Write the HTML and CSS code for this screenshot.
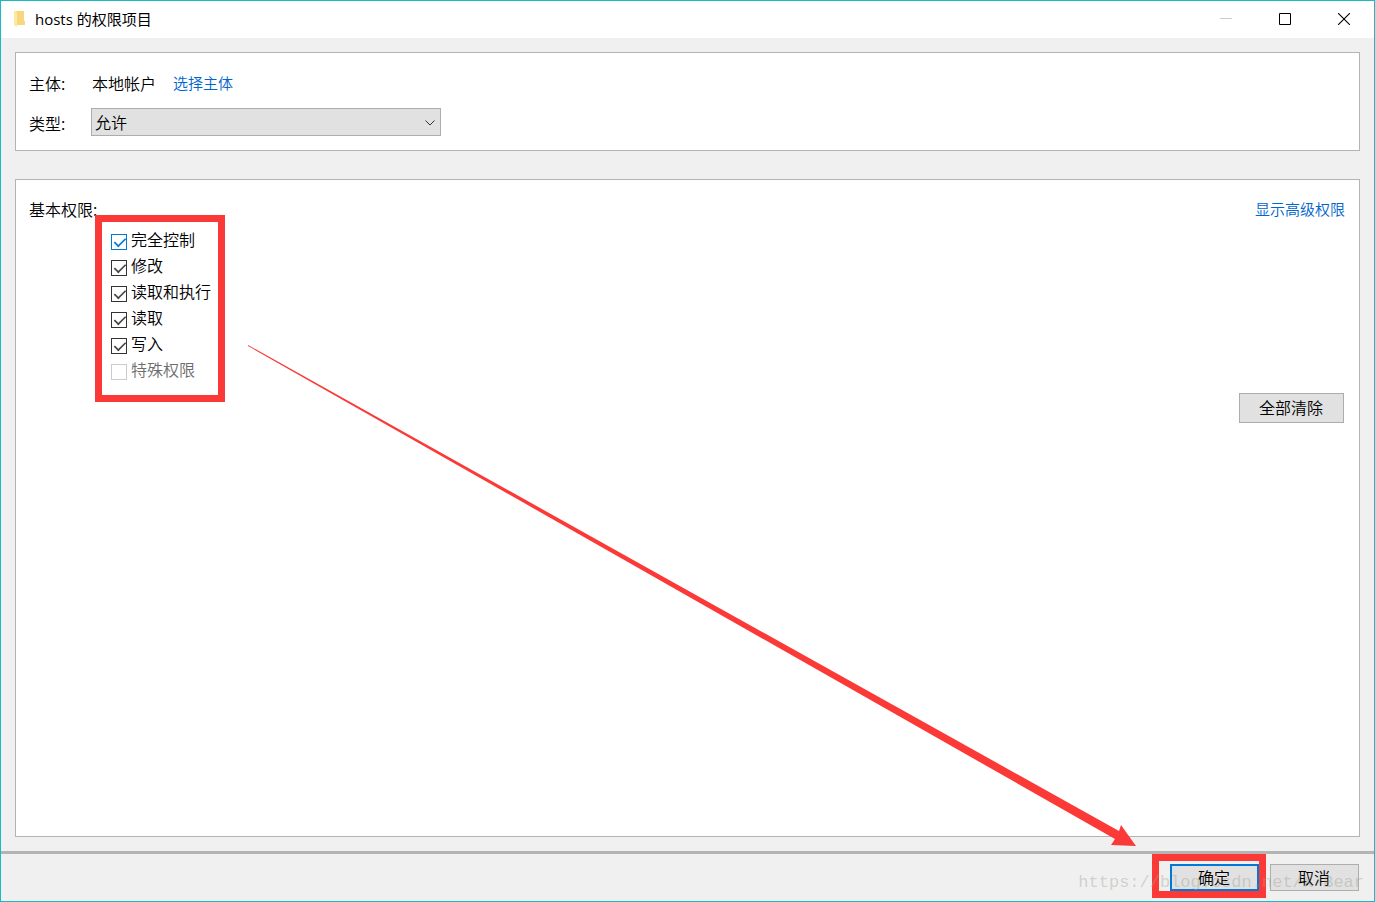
FILE: index.html
```html
<!DOCTYPE html>
<html lang="zh-CN">
<head>
    <meta charset="UTF-8">
    <meta name="viewport" content="width=device-width, initial-scale=1.0">
    <title>hosts 的权限项目</title>
    <link rel="stylesheet" href="styles.css">
</head>
<body>
    <div class="window">
        <header class="titlebar">
            <svg class="folder" width="14" height="18" viewBox="0 0 14 18">
                <path d="M3 1h8v10h1v4H3z" fill="#f6d77c"/>
                <path d="M1 1h2l1 2v14l-3-2z" fill="#fde9a4"/>
            </svg>
            <h1>hosts 的权限项目</h1>
            <div class="window-buttons">
                <button type="button" aria-label="最小化" disabled>
                    <svg width="12" height="12" viewBox="0 0 12 12"><path d="M0 5.5h12" stroke="#ccc"/></svg>
                </button>
                <button type="button" aria-label="最大化">
                    <svg width="12" height="12" viewBox="0 0 12 12"><path d="M.5.5h11v11H.5z" fill="none" stroke="#000"/></svg>
                </button>
                <button type="button" aria-label="关闭">
                    <svg width="12" height="12" viewBox="0 0 12 12"><path d="M0 0l12 12M12 0L0 12" stroke="#000" stroke-width="1.1"/></svg>
                </button>
            </div>
        </header>

        <main class="content">
            <section class="panel principal">
                <span>主体:</span>
                <div class="principal-name">
                    <span>本地帐户</span>
                    <a href="#">选择主体</a>
                </div>
                <label for="type">类型:</label>
                <div class="select">
                    <select id="type">
                        <option>允许</option>
                        <option>拒绝</option>
                    </select>
                    <svg class="chevron" width="10" height="6" viewBox="0 0 10 6"><path d="M.5.5L5 5 9.500.5" fill="none" stroke="#333"/></svg>
                </div>
            </section>

            <section class="panel permissions">
                <div class="permissions-head">
                    <span id="basic">基本权限:</span>
                    <a href="#">显示高级权限</a>
                </div>
                <div class="permission-list" role="group" aria-labelledby="basic">
                    <label><input type="checkbox" class="hot" checked>完全控制</label>
                    <label><input type="checkbox" checked>修改</label>
                    <label><input type="checkbox" checked>读取和执行</label>
                    <label><input type="checkbox" checked>读取</label>
                    <label><input type="checkbox" checked>写入</label>
                    <label class="disabled"><input type="checkbox" disabled>特殊权限</label>
                </div>
                <button type="button" class="btn clear">全部清除</button>
            </section>
        </main>

        <footer class="actions">
            <div class="confirm">
                <button type="button" class="btn primary">确定</button>
            </div>
            <button type="button" class="btn">取消</button>
            <span class="watermark">https://blog.csdn.net/X Bear</span>
        </footer>

        <svg class="arrow" viewBox="0 0 888 501" preserveAspectRatio="none" aria-hidden="true">
            <path d="M0 0L871 486 873 480 888 501 863 500 867 494 0 1z" fill="#fb3a38"/>
        </svg>
    </div>
</body>
</html>
```
FILE: styles.css
```css
* {
    box-sizing: border-box;
}
body {
    margin: 0;
    font: 16px/22px "Noto Sans CJK SC", sans-serif;
    font-weight: 350;
    color: #000;
}
button, select {
    font: inherit;
    color: inherit;
}
a {
    color: #0066cc;
    font-size: 15px;
    text-decoration: none;
}
.window {
    position: relative;
    display: flex;
    flex-direction: column;
    min-height: 100vh;
    border: 1px solid #1ab9c4;
    background: #f0f0f0;
}

/* title bar */
.titlebar {
    display: flex;
    align-items: center;
    height: 37px;
    padding: 0 1px 1px 12px;
    background: #fff;
}
.titlebar h1 {
    margin: 0 0 0 8px;
    font-family: "Open Sans", "Noto Sans CJK SC", sans-serif;
    font-size: 15px;
    font-weight: 400;
}
.window-buttons {
    display: flex;
    margin-left: auto;
}
.window-buttons button {
    display: flex;
    align-items: center;
    justify-content: center;
    width: 59px;
    height: 36px;
    padding: 0;
    border: 0;
    background: none;
}

/* panels */
.content {
    flex: 1;
    display: flex;
    flex-direction: column;
    gap: 28px;
    padding: 14px;
}
.panel {
    border: 1px solid #b4b4b4;
    background: #fff;
}
.principal {
    display: grid;
    grid-template-columns: 62px 1fr;
    row-gap: 14px;
    padding: 19px 13px 14px;
    align-items: center;
}
.principal label {
    padding-top: 2px;
}
.principal-name {
    display: flex;
    gap: 17px;
    padding-left: 1px;
}
.select {
    position: relative;
    width: 350px;
}
.select select {
    display: block;
    width: 100%;
    height: 28px;
    padding: 0 3px 1px;
    border: 1px solid #adadad;
    border-radius: 0;
    background: #e1e1e1;
    appearance: none;
}
.chevron {
    position: absolute;
    right: 6px;
    top: 12px;
    pointer-events: none;
}
.permissions {
    flex: 1;
    padding: 18px 14px 14px 13px;
}
.permissions-head {
    display: flex;
    justify-content: space-between;
}
.permission-list {
    position: relative;
    width: 130px;
    margin-left: 66px;
    padding: 7px 16px 19px;
}
.permission-list label {
    display: flex;
    align-items: center;
    gap: 4px;
    height: 26px;
    padding-bottom: 2px;
    white-space: nowrap;
}
.permission-list input {
    appearance: none;
    flex: none;
    width: 16px;
    height: 16px;
    margin: 6px 0 0;
    border: 1px solid #333;
    background: #fff;
    color: #444;
}
.permission-list input.hot {
    border-color: #0078d7;
    color: #0078d7;
}
.permission-list input:checked::before {
    content: "";
    display: block;
    width: 12px;
    height: 6px;
    margin: 2px 0 0 1px;
    border: solid currentColor;
    border-width: 0 0 2px 2px;
    transform: rotate(-45deg) scale(0.8);
}
.permission-list input:disabled {
    border-color: #ccc;
}
.permission-list .disabled {
    color: #6d6d6d;
}

/* buttons */
.btn {
    width: 89px;
    height: 27px;
    padding: 0 1px 2px 0;
    border: 1px solid #adadad;
    background: #e1e1e1;
}
.btn.primary {
    border: 2px solid #0078d7;
}
.btn.clear {
    display: block;
    width: 105px;
    height: 30px;
    margin: -9px 1px 0 auto;
}
.actions {
    position: relative;
    display: flex;
    justify-content: flex-end;
    gap: 11px;
    padding: 10px 15px;
    border-top: 3px solid #b4b4b4;
}
.confirm {
    position: relative;
}

/* highlight frames and arrow */
.permission-list::after,
.confirm::after {
    content: "";
    position: absolute;
    border: 7px solid #fb3a38;
    pointer-events: none;
}
.permission-list::after {
    inset: -5px 0 0;
}
.confirm::after {
    inset: -10px -7px -7px -18px;
}
.arrow {
    position: absolute;
    left: 247px;
    top: 344px;
    width: calc(100% - 485px);
    height: calc(100% - 399px);
    pointer-events: none;
}
.watermark {
    position: absolute;
    right: 10px;
    bottom: 7px;
    font-family: "Liberation Mono", monospace;
    font-size: 17px;
    color: rgba(160, 160, 145, 0.4);
    pointer-events: none;
}
```
